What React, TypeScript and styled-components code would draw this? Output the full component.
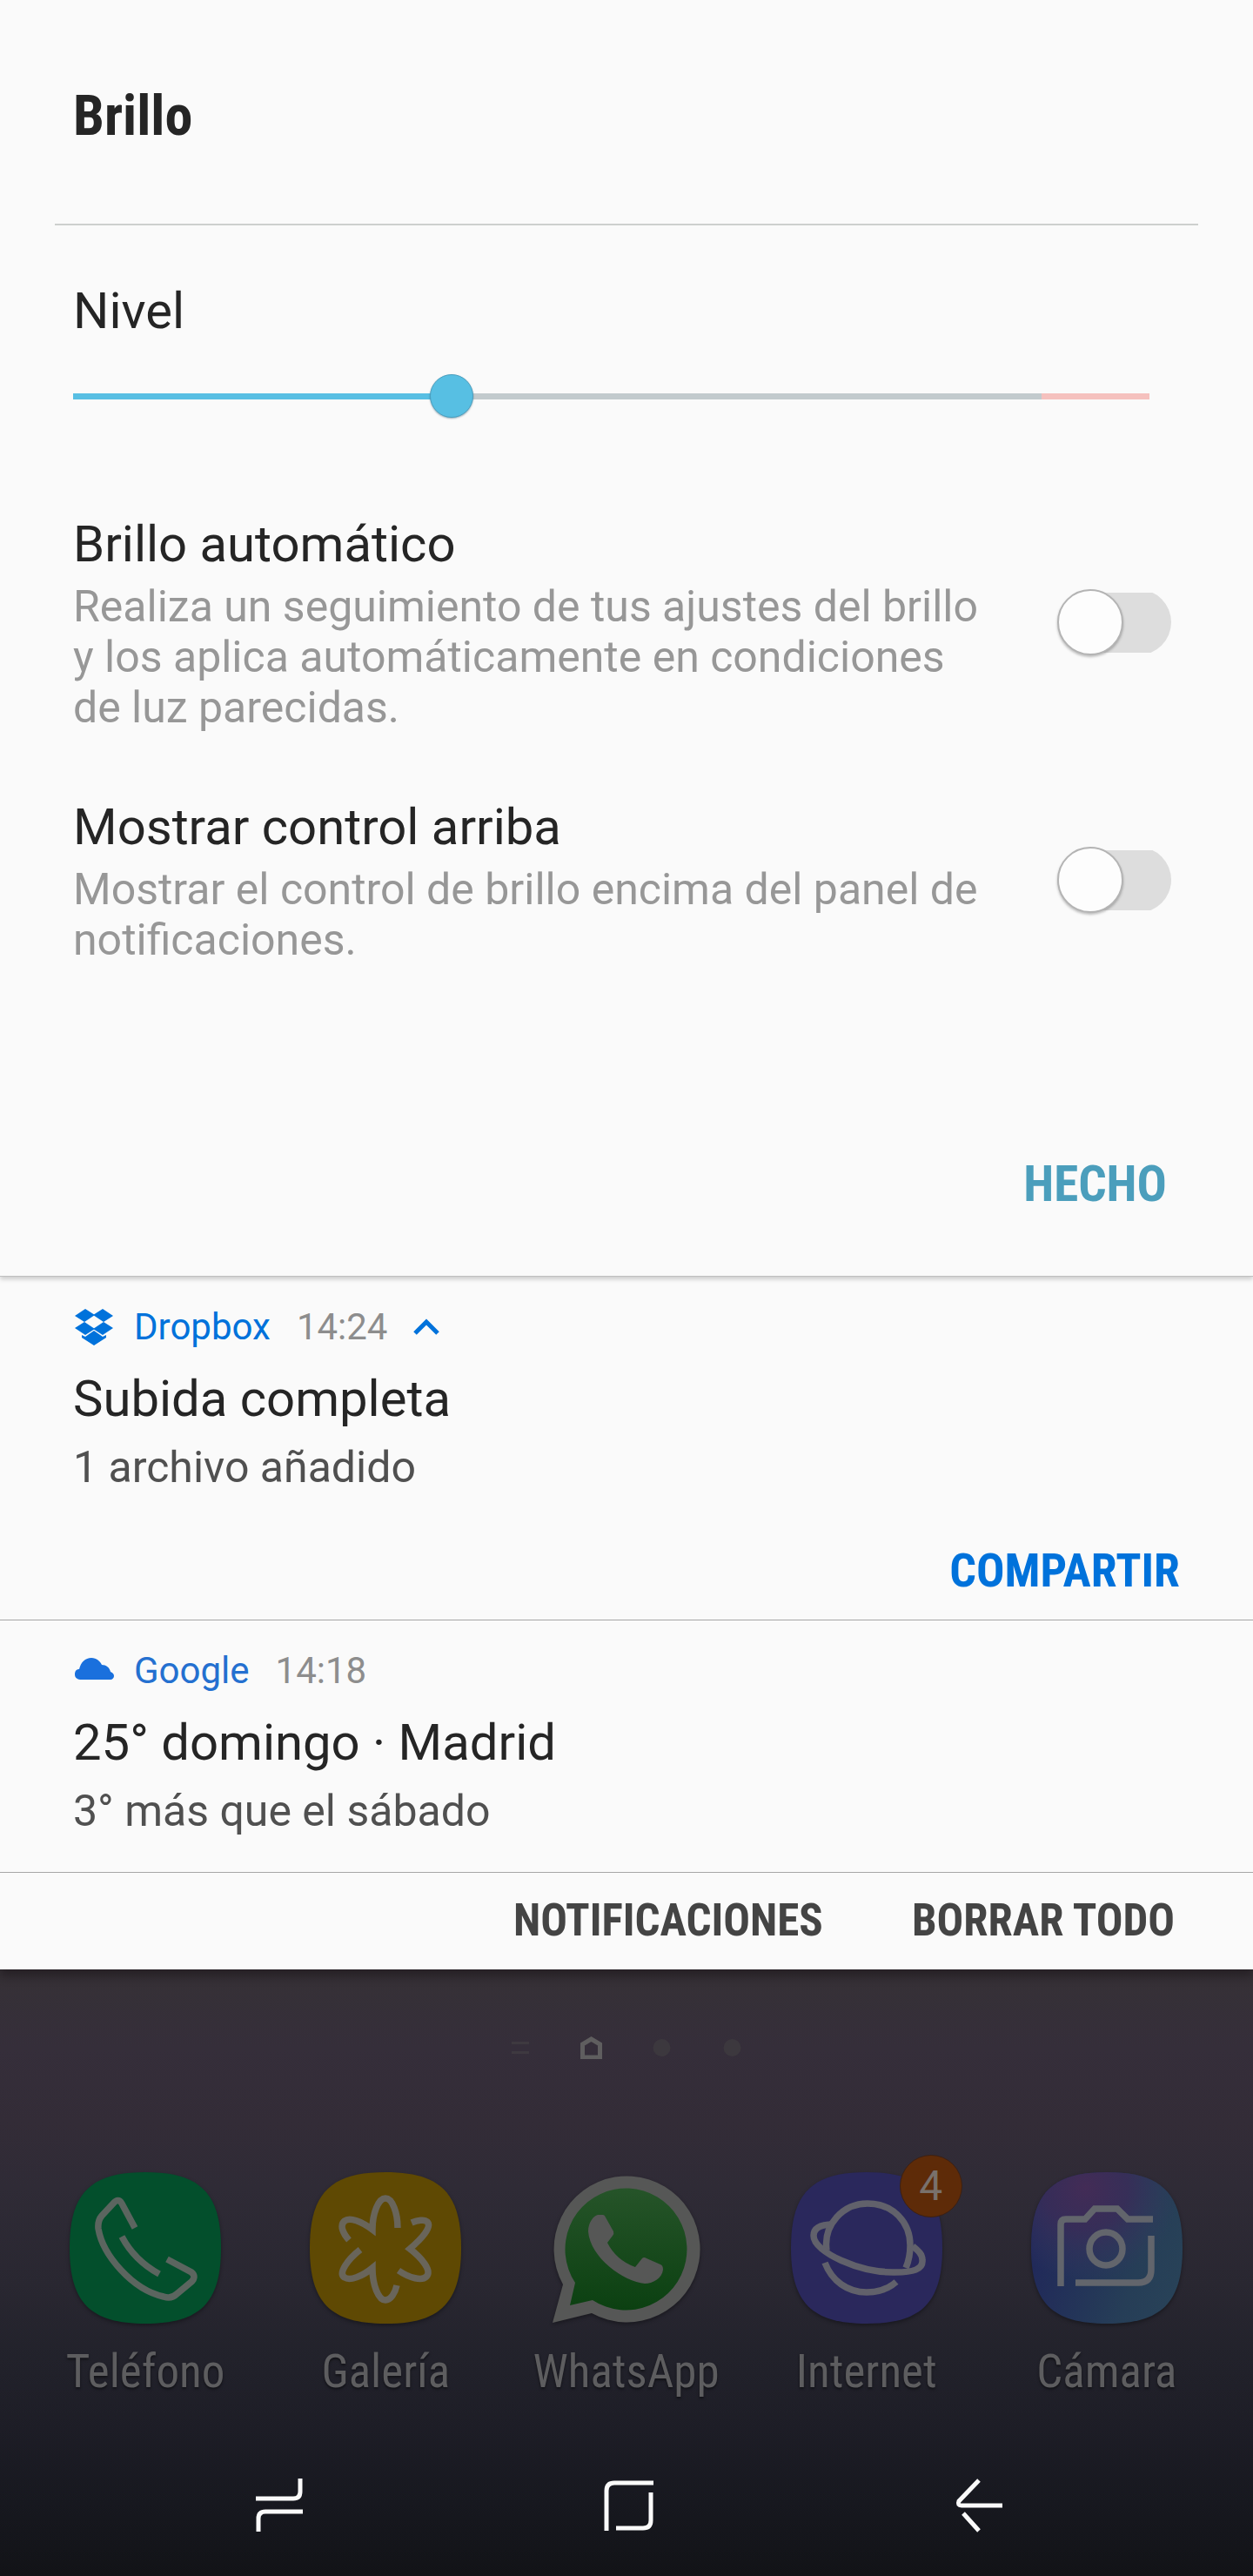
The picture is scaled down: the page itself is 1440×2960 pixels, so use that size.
import React, { useState } from 'react';
import styled, { createGlobalStyle } from 'styled-components';

const GlobalStyle = createGlobalStyle`
  *, *::before, *::after { box-sizing: border-box; }
  body {
    margin: 0;
    background: #121317;
    font-family: Roboto, "Noto Sans", sans-serif;
  }
  h1, h2, h3, p { margin: 0; font-weight: 400; }
  button {
    margin: 0;
    padding: 0;
    border: 0;
    background: none;
    font: inherit;
    cursor: pointer;
  }
`;

const condensed = '"Roboto Condensed", Roboto, "Liberation Sans Narrow", sans-serif';

const Screen = styled.main`
  display: flex;
  flex-direction: column;
  min-height: 100vh;
`;

const Shade = styled.div`
  position: relative;
  background: #fafafa;
  box-shadow: 0 8px 10px rgba(20, 14, 18, 0.45);
`;

const Panel = styled.section`
  padding-bottom: 71px;
  border-bottom: 1px solid #bfbfbf;
  box-shadow: 0 3px 5px rgba(0, 0, 0, 0.18);
`;

const PanelHeader = styled.header`
  margin: 0 63px;
  padding: 96px 21px 85px;
  border-bottom: 2px solid #cdcfce;
`;

const PanelTitle = styled.h1`
  font-family: ${condensed};
  font-size: 64px;
  line-height: 76px;
  font-weight: 700;
  color: #252525;
`;

const Level = styled.div`
  display: flex;
  flex-direction: column;
  gap: 36px;
  padding: 61px 119px 0 84px;
`;

const LevelLabel = styled.label`
  font-size: 58px;
  line-height: 74px;
  color: #252525;
`;

const Slider = styled.input`
  appearance: none;
  width: 100%;
  height: 50px;
  margin: 0;
  background: linear-gradient(
      to right,
      #58bfe3 var(--level),
      #c2cacd var(--level),
      #c2cacd 90%,
      #f5c1be 90%
    )
    center / 100% 7px no-repeat;

  &::-webkit-slider-thumb {
    appearance: none;
    width: 50px;
    height: 50px;
    border: 1px solid #4a9fbf;
    border-radius: 50%;
    background: #57bfe3;
    box-shadow: 0 1px 2px rgba(0, 60, 90, 0.4);
  }
`;

const Settings = styled.div`
  display: flex;
  flex-direction: column;
  gap: 71px;
  padding: 108px 94px 0 84px;
`;

const Setting = styled.div`
  display: flex;
  align-items: center;
  gap: 76px;
`;

const SettingText = styled.div`
  flex: 1;
  display: flex;
  flex-direction: column;
  gap: 6px;
`;

const SettingLabel = styled.label`
  font-size: 58px;
  line-height: 74px;
  color: #252525;
`;

const SettingHint = styled.p`
  font-size: 50px;
  line-height: 58px;
  color: #979797;
`;

const Switch = styled.input`
  appearance: none;
  flex: none;
  display: flex;
  align-items: center;
  width: 131px;
  height: 76px;
  margin: 0;
  background: linear-gradient(#dddddd, #dddddd) right center / 96px 69px no-repeat;
  border-radius: 38px;
  cursor: pointer;

  &::before {
    content: "";
    width: 76px;
    height: 76px;
    border: 2px solid #b4b4b4;
    border-radius: 50%;
    background: #fdfdfd;
    box-shadow: 0 2px 3px rgba(0, 0, 0, 0.25);
  }

  &:checked {
    justify-content: flex-end;
    background: linear-gradient(#a9dff1, #a9dff1) left center / 96px 69px no-repeat;
  }
`;

const PanelActions = styled.div`
  display: flex;
  justify-content: flex-end;
  padding: 218px 99px 0;
`;

const TextButton = styled.button<{ $size: number; $line: number; $color: string }>`
  font-family: ${condensed};
  font-size: ${(p) => p.$size}px;
  line-height: ${(p) => p.$line}px;
  font-weight: 700;
  color: ${(p) => p.$color};
`;

const Notification = styled.article<{ $bottom: number }>`
  padding: 33px 84px ${(p) => p.$bottom}px;
  border-bottom: 1px solid #a6a6a6;
`;

const NotificationMeta = styled.div`
  display: flex;
  align-items: center;
  height: 50px;
  font-size: 42px;
  line-height: 50px;
`;

const MetaIcon = styled.svg`
  flex: none;
  width: 48px;
  height: 48px;
  margin-right: 22px;
`;

const AppName = styled.span<{ $color: string }>`
  margin-right: 30px;
  color: ${(p) => p.$color};
`;

const Time = styled.time`
  color: #8d8d8d;
`;

const Collapse = styled.button`
  display: flex;
  margin-left: 30px;
`;

const NotificationTitle = styled.h2`
  margin-top: 20px;
  font-size: 58px;
  line-height: 74px;
  color: #252525;
`;

const NotificationText = styled.p`
  margin-top: 13px;
  font-size: 50px;
  line-height: 58px;
  color: #505050;
`;

const NotificationActions = styled.div`
  display: flex;
  justify-content: flex-end;
  padding-top: 59px;
`;

const ShadeFooter = styled.footer`
  display: flex;
  justify-content: flex-end;
  gap: 102px;
  padding: 26px 90px 27px;
`;

const Home = styled.section`
  flex: 1;
  padding: 77px 0 50px;
  background: linear-gradient(
    #363136 0%,
    #352e3a 13%,
    #332c37 25%,
    #2f2b36 36%,
    #292731 52%,
    #22222b 64%,
    #1d1d26 76%,
    #17181f 88%,
    #121317 100%
  );
`;

const Pages = styled.div`
  display: flex;
  justify-content: center;
`;

const PageMark = styled.svg`
  width: 81px;
  height: 26px;
`;

const Dock = styled.nav`
  display: grid;
  grid-template-columns: repeat(5, 1fr);
  padding: 130px 30px 0 29px;
`;

const DockApp = styled.a`
  display: flex;
  flex-direction: column;
  align-items: center;
  gap: 24px;
  color: #5d5d5f;
  font-family: ${condensed};
  font-size: 53px;
  line-height: 62px;
  text-decoration: none;
  text-shadow: 0 2px 3px rgba(0, 0, 0, 0.5);
`;

const IconFrame = styled.span`
  position: relative;
  display: block;
  width: 174px;
  height: 174px;
`;

const AppIcon = styled.svg`
  display: block;
  width: 100%;
  height: 100%;
  overflow: visible;
  fill: none;
  filter: drop-shadow(0 2px 2px rgba(0, 0, 0, 0.35));
`;

const Badge = styled.span`
  position: absolute;
  top: -20px;
  right: -23px;
  width: 72px;
  height: 72px;
  border: 1px solid #3c2013;
  border-radius: 50%;
  background: #5e2b08;
  color: #79716c;
  font-family: Roboto, sans-serif;
  font-size: 48px;
  line-height: 70px;
  text-align: center;
  text-shadow: none;
`;

const NavBar = styled.nav`
  display: grid;
  grid-template-columns: repeat(3, 1fr);
  justify-items: center;
  align-items: center;
  padding: 92px 114px 0 120px;
`;

const NavButton = styled.button`
  display: flex;
`;

const NavIcon = styled.svg`
  fill: none;
  stroke: #fafafa;
  stroke-width: 5;
`;

const SQUIRCLE = 'M87 0C150 0 174 24 174 87S150 174 87 174S0 150 0 87S24 0 87 0Z';

const PhoneIcon = () => (
  <AppIcon viewBox="0 0 174 174" aria-hidden="true">
    <path d={SQUIRCLE} fill="#034f2c" />
    <g stroke="#5b655f" strokeWidth="7.5">
      <path d="M75 64L60 36Q56 29 50 36L37 50Q32 56 33 65C38 95 72 135 108 143Q117 146 123 140L140 126Q146 120 140 115L112 100" />
      <path d="M60 74C69 91 83 106 103 117" />
    </g>
  </AppIcon>
);

const GalleryIcon = () => (
  <AppIcon viewBox="0 0 174 174" aria-hidden="true">
    <path d={SQUIRCLE} fill="#5f4903" />
    <g stroke="#69655a" strokeWidth="7.5">
      <path d="M101 64C101 47 95 30 87 30C79 30 72 47 72 66C60 57 46 51 40 56C34 61 38 70 45 78" />
      <path d="M58 89C44 100 32 116 40 121C46 125 60 120 72 110C72 130 79 147 87 147C93 147 98 139 100 130" />
      <path d="M102 113C115 122 129 125 134 120C141 113 128 98 115 88C128 77 141 63 135 57C132 54 124 55 117 58" />
    </g>
  </AppIcon>
);

const WhatsAppIcon = () => (
  <AppIcon viewBox="0 0 174 174" aria-hidden="true">
    <defs>
      <linearGradient id="wa" x1="0" y1="0" x2="0" y2="1">
        <stop offset="0" stopColor="#265429" />
        <stop offset="1" stopColor="#0b4011" />
      </linearGradient>
    </defs>
    <path d="M15 129A84 84 0 1 1 48 162L3 173Z" fill="#565756" />
    <path d="M29 127A70 70 0 1 1 49 147L23 153Z" fill="url(#wa)" />
    <path
      d="M44 68C44 58 50 50 55 49L61 49Q63 49 64 52L73 68Q74 71 72 73L66 81Q76 101 98 109L106 99Q108 97 111 99L127 106Q130 107 130 112C129 122 118 128 109 128C85 126 46 98 44 68Z"
      fill="#565756"
    />
  </AppIcon>
);

const InternetIcon = () => (
  <AppIcon viewBox="0 0 174 174" aria-hidden="true">
    <path d={SQUIRCLE} fill="#2a285c" />
    <g stroke="#61616b" strokeWidth="7.5">
      <path d="M41 90C37 60 60 36 88 36C118 36 137 58 137 84C137 95 135 103 132 110" />
      <path d="M49 60C38 60 26 62 26 73C26 92 80 116 120 115C140 115 152 112 151 101C151 94 146 90 140 85" />
      <path d="M39 104C47 125 65 138 87 138C100 138 112 134 121 126" />
    </g>
  </AppIcon>
);

const CameraIcon = () => (
  <AppIcon viewBox="0 0 174 174" aria-hidden="true">
    <defs>
      <linearGradient id="camBase" x1="0" y1="0.4" x2="1" y2="0.7">
        <stop offset="0" stopColor="#20275a" />
        <stop offset="0.7" stopColor="#263e57" />
        <stop offset="1" stopColor="#284258" />
      </linearGradient>
      <radialGradient id="camGlow" cx="0.36" cy="0.1" r="0.62">
        <stop offset="0" stopColor="#432c56" />
        <stop offset="0.45" stopColor="#3a2d58" stopOpacity="0.85" />
        <stop offset="1" stopColor="#353a60" stopOpacity="0" />
      </radialGradient>
    </defs>
    <path d={SQUIRCLE} fill="url(#camBase)" />
    <path d={SQUIRCLE} fill="url(#camGlow)" />
    <g stroke="#62656c" strokeWidth="7.5">
      <path d="M34 131V60Q34 54 40 54H62L73 42H99L111 54H140" />
      <path d="M138 73V112Q138 127 123 127H51" />
      <circle cx="86" cy="88" r="19" />
    </g>
  </AppIcon>
);

const DropboxIcon = () => (
  <MetaIcon viewBox="0 0 48 48" fill="#0072db" aria-hidden="true">
    <path d="M14 3L25 10L13 18L2 11ZM34 3L46 11L35 18L23 10ZM2 25L13 18L25 26L14 33ZM35 18L46 25L34 33L23 26ZM24 28L34 35L38 33V36L24 45L10 36V33L14 35Z" />
  </MetaIcon>
);

const CloudIcon = () => (
  <MetaIcon viewBox="0 0 48 48" fill="#1a70dd" aria-hidden="true">
    <path d="M10 34C5 34 2 32 2 28C2 24 4 22 7 22C9 14 14 9 21 9C27 9 31 13 33 17C38 17 42 20 43 25C46 26 47 28 47 30C47 32 45 34 43 34Z" />
  </MetaIcon>
);

const settings = [
  {
    id: 'auto',
    label: 'Brillo automático',
    hint: 'Realiza un seguimiento de tus ajustes del brillo y los aplica automáticamente en condiciones de luz parecidas.',
  },
  {
    id: 'top',
    label: 'Mostrar control arriba',
    hint: 'Mostrar el control de brillo encima del panel de notificaciones.',
  },
];

const apps = [
  { name: 'Teléfono', Icon: PhoneIcon },
  { name: 'Galería', Icon: GalleryIcon },
  { name: 'WhatsApp', Icon: WhatsAppIcon },
  { name: 'Internet', Icon: InternetIcon, badge: 4 },
  { name: 'Cámara', Icon: CameraIcon },
];

const MAX_LEVEL = 255;

export default function App() {
  const [level, setLevel] = useState(88);

  return (
    <Screen>
      <GlobalStyle />
      <Shade>
        <Panel>
          <PanelHeader>
            <PanelTitle>Brillo</PanelTitle>
          </PanelHeader>
          <Level>
            <LevelLabel htmlFor="level">Nivel</LevelLabel>
            <Slider
              id="level"
              type="range"
              min={0}
              max={MAX_LEVEL}
              value={level}
              onChange={(e) => setLevel(Number(e.target.value))}
              style={{ '--level': `${(level / MAX_LEVEL) * 100}%` } as React.CSSProperties}
            />
          </Level>
          <Settings>
            {settings.map((s) => (
              <Setting key={s.id}>
                <SettingText>
                  <SettingLabel htmlFor={s.id}>{s.label}</SettingLabel>
                  <SettingHint>{s.hint}</SettingHint>
                </SettingText>
                <Switch id={s.id} type="checkbox" role="switch" />
              </Setting>
            ))}
          </Settings>
          <PanelActions>
            <TextButton type="button" $size={57} $line={68} $color="#4b9ebc">HECHO</TextButton>
          </PanelActions>
        </Panel>

        <Notification $bottom={25}>
          <NotificationMeta>
            <DropboxIcon />
            <AppName $color="#0072db">Dropbox</AppName>
            <Time>14:24</Time>
            <Collapse type="button" aria-label="Contraer">
              <svg width="30" height="20" viewBox="0 0 30 20" fill="none" stroke="#0072db" strokeWidth="5">
                <path d="M2 17L15 4L28 17" />
              </svg>
            </Collapse>
          </NotificationMeta>
          <NotificationTitle>Subida completa</NotificationTitle>
          <NotificationText>1 archivo añadido</NotificationText>
          <NotificationActions>
            <TextButton type="button" $size={54} $line={62} $color="#0072db">COMPARTIR</TextButton>
          </NotificationActions>
        </Notification>

        <Notification $bottom={41}>
          <NotificationMeta>
            <CloudIcon />
            <AppName $color="#2470d0">Google</AppName>
            <Time>14:18</Time>
          </NotificationMeta>
          <NotificationTitle>25° domingo · Madrid</NotificationTitle>
          <NotificationText>3° más que el sábado</NotificationText>
        </Notification>

        <ShadeFooter>
          <TextButton type="button" $size={51} $line={58} $color="#444444">NOTIFICACIONES</TextButton>
          <TextButton type="button" $size={51} $line={58} $color="#444444">BORRAR TODO</TextButton>
        </ShadeFooter>
      </Shade>

      <Home>
        <Pages aria-hidden="true">
          <PageMark viewBox="0 0 81 26">
            <path d="M30 6h20v3h-20zM30 17h20v3h-20z" fill="#3e3940" />
          </PageMark>
          <PageMark viewBox="0 0 81 26">
            <path d="M30.500 24V9L40.500 3L50.500 9V24Z" fill="none" stroke="#5f5e5f" strokeWidth="5" />
          </PageMark>
          <PageMark viewBox="0 0 81 26">
            <circle cx="40.500" cy="13" r="10" fill="#3c383e" />
          </PageMark>
          <PageMark viewBox="0 0 81 26">
            <circle cx="40.500" cy="13" r="10" fill="#3c383e" />
          </PageMark>
        </Pages>

        <Dock aria-label="Aplicaciones">
          {apps.map(({ name, Icon, badge }) => (
            <DockApp key={name} href={`#${name}`}>
              <IconFrame>
                <Icon />
                {badge && <Badge>{badge}</Badge>}
              </IconFrame>
              {name}
            </DockApp>
          ))}
        </Dock>

        <NavBar aria-label="Sistema">
          <NavButton type="button" aria-label="Recientes">
            <NavIcon width="54" height="62" viewBox="0 0 54 62">
              <path d="M51 0V15Q51 23 43 23H0M54 38H11Q3 38 3 46V61" />
            </NavIcon>
          </NavButton>
          <NavButton type="button" aria-label="Inicio">
            <NavIcon width="58" height="58" viewBox="0 0 58 58">
              <path d="M3 58V12Q3 3 12 3H57M54 14V46Q54 55 45 55H14" />
            </NavIcon>
          </NavButton>
          <NavButton type="button" aria-label="Atrás">
            <NavIcon width="54" height="62" viewBox="0 0 54 62">
              <path d="M27 2L4 26Q2 31 7 31H54M9 40L27 60" />
            </NavIcon>
          </NavButton>
        </NavBar>
      </Home>
    </Screen>
  );
}
